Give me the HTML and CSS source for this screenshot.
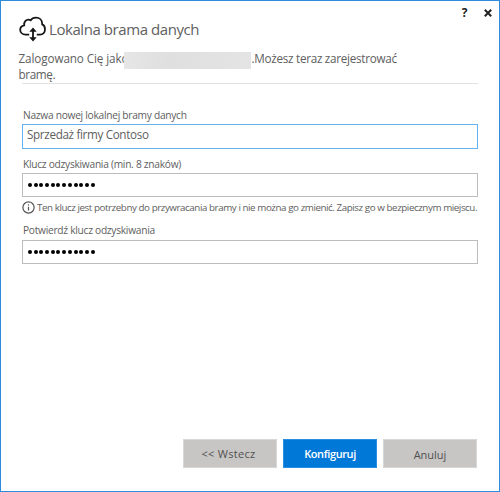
FILE: index.html
```
<!DOCTYPE html>
<html lang="pl">
<head>
<meta charset="utf-8">
<title>Lokalna brama danych</title>
<link rel="stylesheet" href="styles.css">
</head>
<body>
<main class="window">
  <div class="titlebar">
    <span class="help">?</span>
    <svg class="close" width="8" height="8" viewBox="0 0 8 8"><path d="M.8.8 7.2 7.2M7.2.8.8 7.2"/></svg>
  </div>
  <header class="heading">
    <svg class="cloud" width="28" height="26" viewBox="0 0 28 26">
      <path class="line" d="M10.2 18.6H6.5C3.4 18.6 1.2 16.5 1.2 13.8c0-2.3 1.6-4.1 4-4.500C4.800 5.700 7 3.700 9.5 3.700c.8 0 1.600.2 2.200.6C12.800 2.500 14.800 1.700 17 1.700c3.600 0 6.200 2.600 6.200 6.200v.5c1.800.6 2.800 2.500 2.800 4.900 0 3-2 5.300-5 5.300h-3.200"/>
      <path class="line" d="M14 14.500v8.500"/>
      <path d="M14 11.600l3.700 4.200h-7.400zM14 25.400l3.700-4.200h-7.400z"/>
    </svg>
    <h1>Lokalna brama danych</h1>
  </header>
  <p class="intro"><span class="line-one"><span class="signed">Zalogowano Cię jako</span><span class="account"></span><span class="next">.Możesz teraz zarejestrować</span></span><span class="line-two">bramę.</span></p>
  <form class="form">
    <label class="name-label">Nazwa nowej lokalnej bramy danych</label>
    <div class="field active">Sprzedaż firmy Contoso</div>
    <label class="key-label">Klucz odzyskiwania (min. 8 znaków)</label>
    <div class="field secret"><i></i><i></i><i></i><i></i><i></i><i></i><i></i><i></i><i></i><i></i><i></i><i></i></div>
    <div class="note">
      <svg width="13" height="13" viewBox="0 0 13 13"><circle cx="6.500" cy="6.500" r="5.600"/><path d="M6.500 5.700v3.900M6.500 3.200v1.400"/></svg>
      <span>Ten klucz jest potrzebny do przywracania bramy i nie można go zmienić. Zapisz go w bezpiecznym miejscu.</span>
    </div>
    <label class="confirm-label">Potwierdź klucz odzyskiwania</label>
    <div class="field secret"><i></i><i></i><i></i><i></i><i></i><i></i><i></i><i></i><i></i><i></i><i></i><i></i></div>
  </form>
  <footer class="actions">
    <div class="button back"><span>&lt;&lt; Wstecz</span></div>
    <div class="button primary"><span>Konfiguruj</span></div>
    <div class="button cancel"><span>Anuluj</span></div>
  </footer>
</main>
</body>
</html>
```
FILE: styles.css
```
* { box-sizing: border-box; }
body { margin: 0; font-family: "Open Sans", "Noto Sans", sans-serif; color: #606060; }
.window { display: flex; flex-direction: column; width: 500px; height: 492px; border: 1px solid #2f8bdb; background: #fff; white-space: nowrap; }
.titlebar { display: flex; justify-content: flex-end; align-items: center; gap: 16px; height: 15px; padding: 8px 7.500px 0 0; }
.help { font-size: 12px; line-height: 14px; font-weight: 700; color: #222; }
.close { stroke: #222; stroke-width: 2; fill: none; }
.heading { display: flex; height: 32px; padding-left: 18px; align-items: flex-start; }
.cloud { fill: #161616; flex: none; margin-right: 2px; }
.cloud .line { fill: none; stroke: #161616; stroke-width: 1.800; }
h1 { margin: 0; font-size: 15px; line-height: 26px; font-weight: 400; letter-spacing: -.43px; }
.intro { margin: 0; height: 35px; padding-left: 17.500px; font-size: 11.700px; line-height: 16px; letter-spacing: -.35px; }
.line-one { display: flex; height: 16px; margin-top: 2px; }
.signed { width: 105.500px; letter-spacing: -.1px; }
.account { width: 127px; height: 17px; margin-top: 2px; background: linear-gradient(90deg, #e6e6e6, #dfdfdf 35%, #e4e4e4); flex: none; position: relative; }
.next { margin-left: .5px; letter-spacing: -.28px; }
.line-two { display: block; }
.form { display: flex; flex-direction: column; margin: 0 21px 0 21px; border-top: 1px solid #e2e2e2; padding-top: 22px; }
label { font-size: 10.200px; line-height: 18px; padding-left: 1px; letter-spacing: -.27px; }
.field { height: 24px; border: 1px solid #bdbdbd; padding-left: 4px; font-size: 11.700px; line-height: 19px; letter-spacing: -.35px; }
.field.active { border-color: #65b0ee; height: 25px; }
.key-label { margin-top: 6px; }
.secret { display: flex; align-items: center; gap: 1.700px; padding-left: 5px; }
.secret i { width: 4px; height: 4px; border-radius: 50%; background: #000; }
.note { display: flex; align-items: center; height: 20px; gap: 2px; font-size: 9.800px; letter-spacing: -.44px; }
.note svg { flex: none; fill: none; stroke: #555; stroke-width: 1.200; }
.confirm-label { margin-top: 4px; margin-bottom: 1px; }
.actions { display: flex; gap: 6px; margin: auto 22px 23px 182px; }
.button { width: 94px; height: 29px; background: #c8c6c4; border: 1px solid #d8d7d6; color: #505050; font-size: 11px; line-height: 28px; text-align: center; }
.back { letter-spacing: .3px; padding-right: 3px; }
.cancel { line-height: 30px; }
.primary { background: #0078d7; border-color: #2a8fe0; color: #fff; font-weight: 600; letter-spacing: -.4px; }
```
